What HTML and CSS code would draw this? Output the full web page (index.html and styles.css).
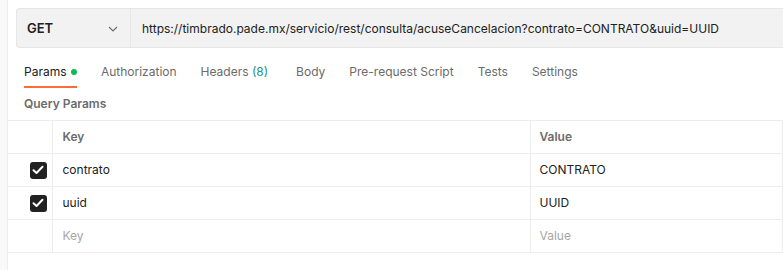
FILE: index.html
```html
<!DOCTYPE html>
<html lang="en">

<head>
    <meta charset="UTF-8">
    <title>Request</title>
    <link rel="stylesheet" href="styles.css">
</head>

<body>
    <div class="app">
        <div class="side-strip"></div>

        <div class="request-pane">
            <!-- method + url -->
            <div class="url-bar">
                <div class="method">
                    <span class="method-name">GET</span>
                    <svg class="chevron" width="10" height="6" viewBox="0 0 10 6">
                        <path d="M1 1 L5 5 L9 1" fill="none" stroke="#6b6b6b" stroke-width="1.1" />
                    </svg>
                </div>
                <div class="url">https://timbrado.pade.mx/servicio/rest/consulta/acuseCancelacion?contrato=CONTRATO&amp;uuid=UUID</div>
            </div>

            <!-- tabs -->
            <div class="tabs">
                <div class="tab active">Params <span class="dot"></span></div>
                <div class="tab">Authorization</div>
                <div class="tab">Headers <span class="count">(8)</span></div>
                <div class="tab">Body</div>
                <div class="tab">Pre-request Script</div>
                <div class="tab">Tests</div>
                <div class="tab">Settings</div>
            </div>

            <div class="section-title">Query Params</div>

            <table class="params">
                <tr class="heading">
                    <td class="check-col"></td>
                    <td class="key-col">Key</td>
                    <td>Value</td>
                </tr>
                <tr>
                    <td class="check-col"><span class="checkbox"><svg width="12" height="10" viewBox="0 0 12 10"><path d="M1.5 5.2 L4.5 8 L10.5 1.8" fill="none" stroke="#fff" stroke-width="2" stroke-linecap="round" stroke-linejoin="round" /></svg></span></td>
                    <td class="key-col">contrato</td>
                    <td>CONTRATO</td>
                </tr>
                <tr>
                    <td class="check-col"><span class="checkbox"><svg width="12" height="10" viewBox="0 0 12 10"><path d="M1.5 5.2 L4.5 8 L10.5 1.8" fill="none" stroke="#fff" stroke-width="2" stroke-linecap="round" stroke-linejoin="round" /></svg></span></td>
                    <td class="key-col">uuid</td>
                    <td>UUID</td>
                </tr>
                <tr class="placeholder">
                    <td class="check-col"></td>
                    <td class="key-col">Key</td>
                    <td>Value</td>
                </tr>
            </table>
        </div>
    </div>
</body>

</html>
```

FILE: styles.css
```css
body {
    margin: 0;
    font-family: Inter, 'Noto Sans', Arial, sans-serif;
    font-size: 12px;
    color: #212121;
    background: #fff;
}

.app {
    display: flex;
    min-height: 270px;
}

.side-strip {
    width: 7px;
    flex: none;
    background: #f9f9f9;
    border-right: 1px solid #ededed;
}

.request-pane {
    flex: 1;
    overflow: hidden;
}

/* url bar */
.url-bar {
    display: flex;
    height: 38px;
    margin: 8px 0 0 8px;
    background: #f2f2f2;
    border: 1px solid #e6e6e6;
    border-right: none;
    border-radius: 4px 0 0 4px;
}

.method {
    width: 114px;
    flex: none;
    display: flex;
    align-items: center;
    justify-content: space-between;
    padding: 0 12px 0 10px;
    box-sizing: border-box;
    border-right: 1px solid #e6e6e6;
}

.method-name {
    font-weight: 600;
    font-size: 13px;
    color: #212121;
}

.chevron {
    margin-top: 1px;
}

.url {
    display: flex;
    align-items: center;
    padding-left: 11px;
    white-space: nowrap;
    color: #212121;
}

/* tabs */
.tabs {
    display: flex;
    gap: 24px;
    padding-left: 16px;
}

.tab {
    padding: 16px 0 6px;
    line-height: 16px;
    color: #6b6b6b;
    border-bottom: 2px solid transparent;
    white-space: nowrap;
}

.tab.active {
    color: #212121;
    border-bottom-color: #ff6c37;
}

.dot {
    display: inline-block;
    width: 6px;
    height: 6px;
    margin-left: 1px;
    border-radius: 50%;
    background: #0cbb52;
    vertical-align: 1px;
}

.count {
    color: #1a8f87;
    margin-right: 4px;
}

.section-title {
    padding-left: 16px;
    margin: 8px 0;
    line-height: 16px;
    font-weight: 600;
    color: #6b6b6b;
}

/* params table */
.params {
    width: 100%;
    border-collapse: collapse;
}

.params td {
    height: 32px;
    padding: 0 9px;
    border: 1px solid #ededed;
    border-left: none;
    border-right: 1px solid #ededed;
    vertical-align: middle;
    line-height: 16px;
}

.params tr.heading td {
    font-weight: 600;
    color: #6b6b6b;
}

.params tr.placeholder td {
    color: #a6a6a6;
}

.params td.check-col {
    width: 44px;
    padding: 0 5px 0 0;
    text-align: right;
    box-sizing: border-box;
}

.params td.key-col {
    width: 478px;
    padding-left: 10px;
    box-sizing: border-box;
}

.checkbox {
    display: inline-flex;
    align-items: center;
    justify-content: center;
    width: 17px;
    height: 17px;
    border-radius: 3px;
    background: #212121;
    vertical-align: middle;
}
```
